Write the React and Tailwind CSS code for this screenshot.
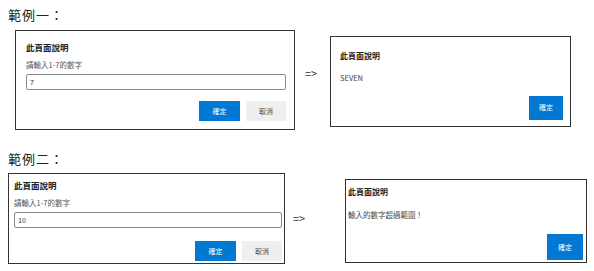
const font = { fontFamily: '"Noto Sans CJK TC", "Noto Sans", sans-serif' };

function PromptDialog({ value, className }) {
  return (
    <div className={`flex flex-col border border-[#333] bg-white ${className}`}>
      <p className="text-[8.5px] font-bold leading-none text-[#222]">此頁面說明</p>
      <p className="mt-[9px] text-[7.5px] leading-none text-[#555]">請輸入1-7的數字</p>
      <div className="mt-[6px] flex h-[16px] items-center rounded-[2px] border border-[#8a8a8a] px-[3px] text-[7px] text-[#333]">
        {value}
      </div>
      <div className="mt-auto flex justify-end gap-[6px]">
        <button type="button" className="h-[20px] w-[41px] bg-[#0078d4] text-[7px] text-white">
          確定
        </button>
        <button type="button" className="h-[20px] w-[40px] bg-[#efefef] text-[7px] text-[#444]">
          取消
        </button>
      </div>
    </div>
  );
}

function AlertDialog({ message, className }) {
  return (
    <div className={`flex shrink-0 flex-col border border-[#333] bg-white ${className}`}>
      <p className="text-[8px] font-bold leading-none text-[#222]">此頁面說明</p>
      <p className="text-[7.5px] leading-none text-[#444]">{message}</p>
      <div className="mt-auto flex justify-end">
        <button type="button" className="bg-[#0078d4] text-[7px] text-white">
          確定
        </button>
      </div>
    </div>
  );
}

export default function App() {
  return (
    <div style={font} className="h-[271px] w-[594px] overflow-hidden bg-white">
      <h2 className="ml-[8px] pt-[8px] text-[13px] leading-[14px] tracking-[1px] text-[#222]">範例一：</h2>
      <div className="flex items-start">
        <PromptDialog value="7" className="ml-[15px] mt-[8px] h-[100px] w-[280px] shrink-0 pl-[10px] pr-[8px] pt-[12px] pb-[8px]" />
        <span className="ml-[10px] mt-[46px] w-[25px] shrink-0 text-[11px] leading-none text-[#333]">=&gt;</span>
        <AlertDialog
          message="SEVEN"
          className="mt-[14px] h-[91px] w-[241px] gap-[14px] pl-[9px] pr-[7px] pt-[15px] pb-[9px] [&_button]:h-[24px] [&_button]:w-[34px]"
        />
      </div>

      <h2 className="ml-[8px] mt-[22px] text-[13px] leading-[14px] tracking-[1px] text-[#222]">範例二：</h2>
      <div className="flex items-start">
        <PromptDialog value="10" className="ml-[8px] mt-[7px] h-[91px] w-[277px] shrink-0 pl-[5px] pr-[2px] pt-[7px] pb-[2px]" />
        <span className="ml-[8px] mt-[47px] w-[52px] shrink-0 text-[11px] leading-none text-[#333]">=&gt;</span>
        <AlertDialog
          message="輸入的數字超過範圍！"
          className="mt-[13px] h-[84px] w-[242px] gap-[15px] px-[2px] pt-[8px] pb-[2px] [&_button]:h-[26px] [&_button]:w-[36px] [&_button]:mr-[1px]"
        />
      </div>
    </div>
  );
}
